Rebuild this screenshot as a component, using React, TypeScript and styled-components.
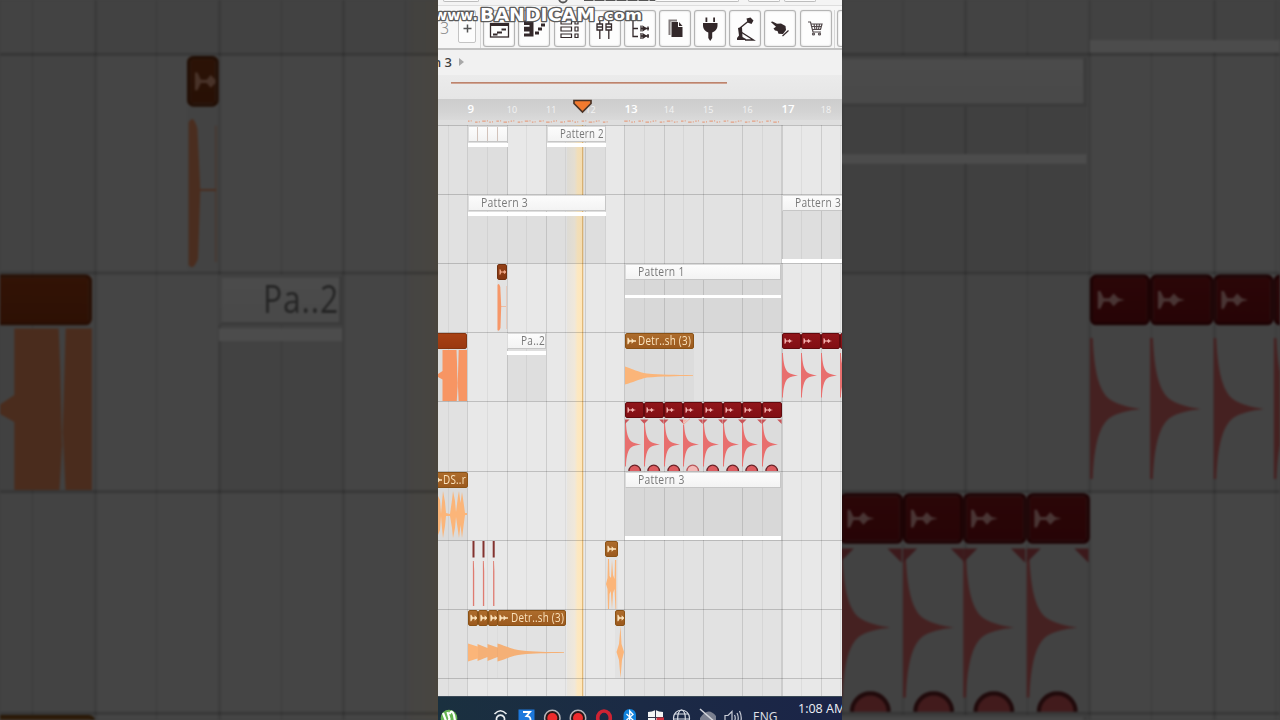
import React from "react";
import styled, { createGlobalStyle, css } from "styled-components";

const GlobalStyle = createGlobalStyle`
  html, body { margin: 0; padding: 0; background: #434343; overflow: hidden; }
  * { box-sizing: border-box; }
`;

/* ---------- stage ---------- */

const TRACK_TOP = 124.9;
const LANE = 69.15;
const BAR = 39.25;

const Stage = styled.main`
  position: relative;
  width: 1280px;
  height: 720px;
  overflow: hidden;
  display: flex;
  justify-content: center;
  background: #434343;
  font-family: "Open Sans", "Noto Sans", sans-serif;
`;

const Backdrop = styled.div`
  position: absolute;
  inset: 0;
  overflow: hidden;
  display: flex;
  justify-content: center;
  align-items: flex-start;
  padding-top: ${TRACK_TOP + LANE}px;
  filter: blur(1.2px);
  &::after {
    content: "";
    position: absolute;
    inset: -4px;
    background: rgba(0, 0, 0, 0.7);
  }
`;

const Magnified = styled.div`
  flex: none;
  width: 404px;
  transform: scale(3.168);
  transform-origin: 202px ${360 - TRACK_TOP - LANE}px;
`;

const Screen = styled.section`
  position: relative;
  width: 404px;
  height: 720px;
  display: flex;
  flex-direction: column;
  overflow: hidden;
  background: #e8e8e8;
`;

/* ---------- top toolbar ---------- */

const UpperBar = styled.div`
  flex: none;
  height: 6px;
  display: flex;
  align-items: flex-start;
  background: #f4f4f4;
  border-bottom: 1px solid #dedede;
  > * { flex: none; }
`;

const Stub = styled.div<{ $w: number; $gap: number; $h?: number }>`
  width: ${(p) => p.$w}px;
  height: ${(p) => p.$h ?? 3}px;
  margin-left: ${(p) => p.$gap}px;
  border: 1px solid #bdbdbd;
  border-top: 0;
  border-radius: 0 0 3px 3px;
  background: #fbfbfb;
`;

const KnobStub = styled.svg`
  margin-left: 78px;
`;

const TitleStub = styled.div`
  width: 71px;
  height: 1px;
  margin-left: 15px;
  background: repeating-linear-gradient(90deg, #555 0 9px, #aaa 9px 11px);
`;

const Toolbar = styled.div`
  flex: none;
  height: 44px;
  display: flex;
  align-items: flex-start;
  padding-top: 4px;
  background: #f7f7f7;
  border-bottom: 2px solid #c3c3c3;
  > * { flex: none; }
`;

const Tempo = styled.span`
  width: 20px;
  padding: 6px 0 0 2px;
  font-size: 16px;
  line-height: 24px;
  color: #777;
  font-weight: 300;
`;

const PlusButton = styled.div`
  width: 18px;
  height: 33px;
  display: flex;
  align-items: center;
  justify-content: center;
  padding-top: 4px;
  border: 1.5px solid #c4c4c4;
  border-radius: 2px;
  background: #fdfdfd;
`;

const Rule = styled.div<{ $l: number; $r: number }>`
  width: 1px;
  height: 38px;
  margin: 0 ${(p) => p.$r}px 0 ${(p) => p.$l}px;
  background: #d8d8d8;
`;

const ToolButton = styled.div`
  width: 32px;
  height: 37px;
  margin-right: 3.15px;
  display: flex;
  align-items: center;
  justify-content: center;
  border: 1.5px solid #b4b4b4;
  border-radius: 3px;
  background: #fdfdfd;
  box-shadow: inset 0 0 2px #ccc, 0 0 1px #ccc;
`;

const Watermark = styled.svg`
  position: absolute;
  left: 0;
  top: 0;
  font-family: "DejaVu Sans", sans-serif;
  font-weight: 700;
`;

/* ---------- breadcrumb, overview, ruler ---------- */

const Breadcrumb = styled.div`
  flex: none;
  height: 25px;
  display: flex;
  align-items: center;
  gap: 7px;
  padding-bottom: 1px;
  background: #f1f1f1;
  color: #3c3c3c;
  font: 500 13px/24px "Noto Sans", sans-serif;
  white-space: pre;
  span { margin-left: -5px; }
`;

const Overview = styled.div`
  flex: none;
  height: 24px;
  padding: 6.5px 0 0 13px;
  background: linear-gradient(#ebebeb, #e6e6e6);
  &::after {
    content: "";
    display: block;
    width: 276px;
    height: 2px;
    background: linear-gradient(#b3735a, #d9b5a6);
  }
`;

const Ruler = styled.div`
  position: relative;
  flex: none;
  height: 21px;
  padding: 0 0 2px 29.5px;
  display: flex;
  align-items: center;
  background: linear-gradient(#cdcdcd, #d3d3d3 60%, #dadada);
`;

const Tick = styled.span<{ $major: boolean }>`
  flex: none;
  width: ${BAR}px;
  color: ${(p) => (p.$major ? "#fff" : "#f3f3f3")};
  font-size: ${(p) => (p.$major ? 11.5 : 9)}px;
  font-weight: ${(p) => (p.$major ? 600 : 500)};
  line-height: 18px;
  padding-top: ${(p) => (p.$major ? 0 : 2)}px;
`;

const Marker = styled.svg`
  position: absolute;
  left: 134px;
  top: -1px;
`;

const Strip = styled.div`
  flex: none;
  height: ${TRACK_TOP - 120}px;
  background: #dedede;
  svg { display: block; }
`;

/* ---------- playlist ---------- */

const Playlist = styled.div`
  position: relative;
  width: 404px;
  overflow: hidden;
  background:
    repeating-linear-gradient(90deg,
      rgba(0,0,0,.12) -9.75px, rgba(0,0,0,.12) -8.75px,
      transparent -8.75px, transparent 9.75px,
      rgba(0,0,0,.05) 9.75px, rgba(0,0,0,.05) 10.75px,
      transparent 10.75px, transparent 29.5px),
    linear-gradient(90deg, #e1e1e1 29.5px, #e8e8e8 29.5px 186.5px, #e2e2e2 186.5px 343.5px, #e8e8e8 343.5px);
`;

const Lanes = styled.div`
  position: relative;
  display: flex;
  flex-direction: column;
`;

const Lane = styled.div`
  position: relative;
  flex: none;
  height: ${LANE}px;
  border-top: 1px solid rgba(0, 0, 0, 0.18);
`;

const Playhead = styled.div`
  position: absolute;
  left: 129px;
  width: 17px;
  top: 0;
  bottom: 0;
  background:
    linear-gradient(90deg, transparent 15.2px, #e2b878 15.200px 16.200px, #e9dcc6 16.200px),
    linear-gradient(90deg, #e8e5df, #f0e8da 45%, #fce8c2 62%, #ffe6b8 90%);
`;

type Tone = "pattern" | "brick" | "amber" | "red" | "rust";

const tones: Record<Tone, { head: string; edge: string; text: string; wave: string }> = {
  pattern: { head: "linear-gradient(#fcfcfc, #f3f3f3)", edge: "#c6c6c6", text: "#787878", wave: "#fff" },
  brick: { head: "linear-gradient(#a84114, #9a3810)", edge: "#84340f", text: "#f1b894", wave: "#f79563" },
  rust: { head: "linear-gradient(#944016, #843612)", edge: "#703010", text: "#f0a888", wave: "#f79768" },
  amber: { head: "linear-gradient(#ad6c2c, #9c5a1e)", edge: "#8a5216", text: "#fbe3bd", wave: "#fbb579" },
  red: { head: "linear-gradient(#90151a, #820f14)", edge: "#620a0e", text: "#f5b3b0", wave: "#e86f6e" },
};

const ClipBox = styled.div<{ $x: number; $w: number }>`
  position: absolute;
  left: ${(p) => p.$x}px;
  width: ${(p) => p.$w}px;
  top: 0;
  bottom: 0;
  display: flex;
  flex-direction: column;
`;

const ClipHead = styled.div<{ $tone: Tone; $short?: boolean }>`
  flex: none;
  height: ${(p) => (p.$short ? 15.5 : 16)}px;
  display: flex;
  align-items: center;
  overflow: hidden;
  background: ${(p) => tones[p.$tone].head};
  border: 1px solid ${(p) => tones[p.$tone].edge};
  color: ${(p) => tones[p.$tone].text};
  ${(p) =>
    p.$tone === "pattern"
      ? css`border-top-color: #dadada; border-left-color: #dcdcdc;`
      : css`border-radius: 2px; padding-left: 1px;`}
`;

const ClipLabel = styled.span<{ $indent: number; $stretch: number }>`
  flex: none;
  margin-left: ${(p) => p.$indent}px;
  font: 500 12px/14px "Open Sans", sans-serif;
  letter-spacing: 0.3px;
  white-space: nowrap;
  transform: scaleX(${(p) => p.$stretch});
  transform-origin: left center;
`;

const ClipBody = styled.div<{ $tone: Tone }>`
  flex: 1;
  min-height: 0;
  overflow: hidden;
  background: rgba(0, 0, 0, ${(p) => (p.$tone === "pattern" ? 0.045 : 0.025)});
  svg { display: block; overflow: visible; }
`;

const NoteStrip = styled.div<{ $top: number; $h: number }>`
  height: ${(p) => p.$h}px;
  margin-top: ${(p) => p.$top}px;
  background: #fff;
`;

const Slices = styled.div`
  flex: 1;
  align-self: stretch;
  display: flex;
  i { flex: 1; border-right: 1px solid #d2c3bb; }
  i:last-child { border: 0; }
`;

type Wave = "kick" | "kickFade" | "kickPale" | "decay" | "block" | "stab" | "swell" | "burst" | "burst2" | "chain";

interface Clip {
  x: number;
  w: number;
  tone: Tone;
  label?: string;
  indent?: number;
  stretch?: number;
  strip?: [number, number];
  wave?: Wave;
  slices?: boolean;
  short?: boolean;
  plain?: boolean;
}

const KICK = "M0 4H.9C1.4 15 3 20.500 6 23.200 8.500 25 12 25.900 16 26.400 12 26.900 8.500 27.600 6 29.400 3 32 1.400 37.500 .9 48.500H0Z";

function WaveShape({ kind, w, color }: { kind: Wave; w: number; color: string }) {
  const fade = kind === "kickFade" || kind === "kickPale";
  const pale = kind === "kickPale";
  return (
    <svg width={w} height={53} fill={color}>
      {(kind === "kick" || fade) && <path d={KICK} />}
      {fade && (
        <g>
          <path d="M0 1.500H4.500L0 6Z" fill={pale ? "#f2b6ab" : "#c9565a"} />
          <path d="M19.600 1.500H15.100L19.600 6Z" fill="#c9565a" />
          {pale && <path d="M0 7L7 .5" stroke="#f0aaa0" strokeWidth="1" />}
          <circle cx="9.700" cy="53" r="5.800" fill={pale ? "#f2b8b6" : "#dc5c60"} stroke={pale ? "#b8585b" : "#6b2226"} strokeWidth="1.300" />
        </g>
      )}
      {kind === "decay" && <path d="M0 17.500C8 20 13 23 22 24.600 36 25.800 50 26 68 26.200V27C50 27 36 27.500 22 28.500 13 30.500 8 33.500 0 35.500Z" />}
      {kind === "block" && <path d="M0 25L4.500 22V1H18.500L19 14 19.600 39 20.400 12 20.700 1H29.500V53H20.700L19.800 34 18.700 53H4.500V30.500L0 28Z" />}
      {kind === "stab" && <path d="M.5 5Q2 2 3.300 7L4.200 26H9V6H9.300V49H9V26.600H4.200L3.500 48Q2 52 .5 50Z" />}
      {kind === "swell" && <path d="M0 8L2 12 3 26 4 14 5 3 7 14 8 25 12 26 14 12 15 3 17 13 18 24 20 8 21 3 22.500 15 24 4 25.500 14 27 25H29V27H27L25.500 38 24 50 22.500 37 21 50 20 43 18 29 17 40 15 50 14 40 12 28H8L7 38 5 50 4 40 3 28 2 42 0 47Z" />}
      {kind === "burst" && <path d="M3 2H4L4.500 19 6 21 7 3 8 18 9.500 22 10 3H11.200V52H10.500L9.500 32 8 36 7 52 5.800 34 4.500 37 4 52H3L2.500 32 1 27 2.500 21Z" />}
      {kind === "burst2" && <path d="M5.500 0L6.500 18 9 26 7 34 5.500 52 4 34 1.500 26 4 18Z" />}
      {kind === "chain" && <path d="M0 17.500L9.500 20.500V18L19.500 22V18L29.500 21.500V17.500C38 20 44 23.500 54 24.500 66 25.700 78 26 96 26.200V27C78 27 66 27.300 54 28.500 44 29.500 38 33 29.500 35.500V31L19.500 35V31L9.500 35V32.500L0 35.500Z" />}
    </svg>
  );
}

const Glyph = styled.svg`
  flex: none;
`;

function SampleGlyph({ bold }: { bold?: boolean }) {
  return (
    <Glyph width="9" height="8" viewBox="0 0 9 8" fill="currentColor">
      {bold ? (
        <path d="M.4 .8H1.300L2.800 3.300H4.600V1.200L6.700 3.300H9V4.700H6.700L4.600 6.800V4.700H2.800L1.300 7.200H.4Z" />
      ) : (
        <path d="M.5 1.200H1.300L2.400 3.500H4.200L5.500 2 7 3.500 9 4 7 4.500 5.500 6 4.200 4.500H2.400L1.300 6.800H.5Z" />
      )}
    </Glyph>
  );
}

const kicks = (from: number, n: number, fade: boolean): Clip[] =>
  Array.from({ length: n }, (_, i) => ({
    x: from + i * 19.65,
    w: 19.65,
    tone: "red" as Tone,
    wave: (fade ? (i === 3 ? "kickPale" : "kickFade") : "kick") as Wave,
  }));

const lanes: Clip[][] = [
  [
    { x: 29.5, w: 40, tone: "pattern", slices: true, strip: [1.3, 4] },
    { x: 108.5, w: 59, tone: "pattern", label: "Pattern 2", indent: 12.5, stretch: 0.81, strip: [1.3, 4] },
  ],
  [
    { x: 29.5, w: 138, tone: "pattern", label: "Pattern 3", indent: 12, stretch: 0.87, strip: [1.1, 4.3] },
    { x: 343.5, w: 80, tone: "pattern", label: "Pattern 3", indent: 12.5, stretch: 0.85, strip: [47.6, 4] },
  ],
  [
    { x: 59, w: 10, tone: "rust", wave: "stab" },
    { x: 186.5, w: 156.5, tone: "pattern", label: "Pattern 1", indent: 12.5, stretch: 0.86, strip: [15.4, 3], short: true },
  ],
  [
    { x: -40, w: 69.4, tone: "brick", wave: "block", plain: true },
    { x: 69, w: 39.3, tone: "pattern", label: "Pa..2", indent: 13, stretch: 0.84, strip: [1.2, 4] },
    { x: 186.5, w: 69, tone: "amber", label: "Detr..sh (3)", indent: 2.5, stretch: 0.82, wave: "decay" },
    ...kicks(343.5, 4, false),
  ],
  kicks(186.5, 8, true),
  [
    { x: -7, w: 37, tone: "amber", label: "DS..r", indent: 0.5, stretch: 0.82, wave: "swell" },
    { x: 186.5, w: 156.5, tone: "pattern", label: "Pattern 3", indent: 12.5, stretch: 0.86, strip: [48, 4] },
  ],
  [{ x: 167.3, w: 12.7, tone: "amber", wave: "burst" }],
  [
    { x: 29.5, w: 10.2, tone: "amber", wave: "chain" },
    { x: 39.5, w: 10.2, tone: "amber" },
    { x: 49.5, w: 10.2, tone: "amber" },
    { x: 59.3, w: 69, tone: "amber", label: "Detr..sh (3)", indent: 2.5, stretch: 0.82 },
    { x: 176.7, w: 10.5, tone: "amber", wave: "burst2" },
  ],
  [],
];

const WaveHolder = styled.div<{ $shift: number }>`
  width: 0;
  margin-left: ${(p) => p.$shift}px;
`;

const ChainBody = styled(ClipBody)`
  overflow: visible;
`;

const Slivers = styled.svg`
  position: absolute;
  left: 33px;
  top: 0;
`;

function ClipView({ clip, quiet }: { clip: Clip; quiet?: boolean }) {
  const showLabel = clip.label && (!quiet || clip.label === "Pa..2");
  const Body = clip.wave === "chain" ? ChainBody : ClipBody;
  const shift = clip.wave === "block" ? 40 : clip.wave === "swell" ? 7 : 0;
  return (
    <ClipBox $x={clip.x} $w={clip.w}>
      <ClipHead $tone={clip.tone} $short={clip.short}>
        {clip.slices && <Slices><i /><i /><i /><i /></Slices>}
        {clip.tone !== "pattern" && !clip.plain && <SampleGlyph bold={clip.tone === "amber"} />}
        {showLabel && (
          <ClipLabel $indent={clip.indent ?? 0} $stretch={clip.stretch ?? 1}>
            {clip.label}
          </ClipLabel>
        )}
      </ClipHead>
      <Body $tone={clip.tone}>
        {clip.strip && <NoteStrip $top={clip.strip[0]} $h={clip.strip[1]} />}
        {clip.wave && (
          <WaveHolder $shift={shift}>
            <WaveShape kind={clip.wave} w={clip.w} color={tones[clip.tone].wave} />
          </WaveHolder>
        )}
      </Body>
    </ClipBox>
  );
}

function Tracks({ from, to, quiet }: { from: number; to: number; quiet?: boolean }) {
  return (
    <Playlist>
      <Playhead />
      <Lanes>
        {lanes.slice(from, to).map((clips, i) => (
          <Lane key={i}>
            {clips.map((c, j) => (
              <ClipView key={j} clip={c} quiet={quiet} />
            ))}
            {from + i === 6 && (
              <Slivers width="30" height="68">
                {[1.5, 11.5, 21.7].map((x) => (
                  <g key={x}>
                    <rect x={x} y="0" width="2" height="16.500" fill="#83332f" />
                    <path d={`M${x + 0.4} 20H${x + 1.3}L${x + 1.7} 30V65H${x + 0.4}Z`} fill="#df7b70" />
                  </g>
                ))}
              </Slivers>
            )}
          </Lane>
        ))}
      </Lanes>
    </Playlist>
  );
}

const TrackArea = styled.div`
  flex: none;
  height: ${696 - TRACK_TOP}px;
  overflow: hidden;
`;

/* ---------- toolbar icons ---------- */

const dark = "#33282a";

const toolIcons: React.ReactNode[] = [
  <g key="playlist" fill="none" stroke={dark}>
    <rect x="2.500" y="6.500" width="18" height="13.500" strokeWidth="1.300" />
    <path d="M2 7.500H21" strokeWidth="3" />
    <path d="M5 17.500H9.500M9 15.500H14M13.500 12.500H18" strokeWidth="2" />
  </g>,
  <g key="piano" fill={dark}>
    <path d="M1 3.500H10.500V19.500H1V16.500H6.500V14.500H1V9.800H6.500V8H1Z" />
    <path d="M12 14.500H16V17.500H12ZM15 10.500H19V13.500H15ZM18 6.500H22V9.500H18Z" />
  </g>,
  <g key="rack" fill="none" stroke={dark} strokeWidth="1.200">
    <path d="M3 3H13.500V7H3ZM3 10H13.500V14H3ZM3 17H13.500V20.500H3ZM17 3H20V7H17ZM17 10H20V14H17ZM17 17H20V20.500H17Z" />
  </g>,
  <g key="mixer" fill="none" stroke={dark} strokeWidth="1.300">
    <path d="M6.800 2V7M6.800 13V22M15.800 2V7M15.800 13V22M4 7H9.500V13H4ZM13 7H18.500V13H13ZM4 10H9.500M13 10H18.500" />
  </g>,
  <g key="browser" fill="none" stroke={dark} strokeWidth="1.300">
    <path d="M5 4V19.500H10M5 11.500H10M13 8.500V14.500M13 16V22M13 11.500H21M13 19H21" />
    <path d="M15 9.500L18 11.500 15 13.500ZM15 17L18 19 15 21ZM20 9.500V13.500M20 17V21" fill={dark} />
  </g>,
  <g key="copy" fill={dark}>
    <path d="M4.500 2.500H13V4.500H6.500V18H4.500Z" opacity=".6" />
    <path d="M7.500 5H14V10H18.500V20H7.500ZM15 5L18.500 9H15Z" />
  </g>,
  <g key="plug" fill={dark}>
    <path d="M6.500 .5H8.300V5H6.500ZM14.200 .5H16V5H14.200ZM4 6H18.500V8.500C18.500 12 16 14.500 13.200 15.500V21L11.200 24 9.300 21V15.500C6.500 14.500 4 12 4 8.500Z" />
  </g>,
  <g key="lamp" fill={dark}>
    <path d="M12.500 1.500L16.500 .5 19.500 3.500 17.500 7 13.500 5.500ZM4 11L8 10 8.500 20 12 22V23H3V21L5 18.500Z" />
    <path d="M6 11L14 4.500M7 15L19.500 23H11" fill="none" stroke={dark} strokeWidth="1.400" />
  </g>,
  <g key="hand" fill={dark}>
    <path d="M1.800 5L3.500 4.500 8 6.800 12 6.500 16.500 9 17 13 14 17 9.500 16.800 8.500 14 6 13.500 4.500 11.500 7 9.800Z" />
    <path d="M13.500 19L19.500 13.500" stroke={dark} strokeWidth="1.200" />
  </g>,
  <g key="cart" fill="none" stroke="#51484a" strokeWidth="1.200">
    <path d="M4 5H6.500L9 15H17M7 7H18L16.500 12.500H8.500M7.500 9.500H17.500M10 7L11 12.500M12.700 7V12.500M15.500 7L14.500 12.500" />
    <circle cx="9.500" cy="17" r="1" /><circle cx="15.500" cy="17" r="1" />
  </g>,
];

/* ---------- taskbar ---------- */

const Taskbar = styled.footer`
  flex: none;
  height: 24px;
  display: flex;
  align-items: flex-start;
  overflow: hidden;
  background: linear-gradient(90deg, #1a303f, #1b2a45 50%, #1b2447);
  border-top: 1px solid #3a4956;
`;

const Tray = styled.div`
  flex: none;
  width: 308px;
  height: 23px;
  overflow: hidden;
  svg { display: block; }
`;

const Lang = styled.span`
  flex: none;
  width: 50px;
  margin-left: 7px;
  padding: 10.5px 0 0;
  color: #e0e3ea;
  font: 12px/20px "Open Sans", sans-serif;
`;

const Clock = styled.span`
  flex: none;
  margin-left: -5px;
  padding-top: 2px;
  color: #eef0f5;
  font: 12.5px/20px "Open Sans", sans-serif;
  white-space: nowrap;
`;

function TrayIcons() {
  return (
    <svg width="308" height="32" viewBox="0 0 308 32">
      <circle cx="11" cy="21" r="8.300" fill="#67b552" />
      <path d="M5 16L8 24Q10 26 11.500 22L9.500 15M11.500 17Q14 12 16 18L17 24" fill="none" stroke="#fff" strokeWidth="2.200" />
      <g fill="none" stroke="#e8ecef" strokeWidth="1.700">
        <path d="M56.500 17Q62.500 10.500 68.500 17" />
        <path d="M59 24A4 4 0 1 1 66 24" />
      </g>
      <rect x="80.500" y="12.500" width="16" height="17" fill="#1c78dc" />
      <path d="M85 15H92L88.500 19Q93 19 92.500 24" fill="none" stroke="#fff" strokeWidth="1.800" />
      {[114.300, 140].map((x) => (
        <g key={x}>
          <circle cx={x} cy="21" r="7.700" fill="#271719" stroke="#b4b4b8" strokeWidth="1.500" />
          <circle cx={x} cy="21" r="5" fill="#ef2b2c" />
        </g>
      ))}
      <ellipse cx="166" cy="21" rx="6.300" ry="7" fill="none" stroke="#cf2333" strokeWidth="3.600" />
      <rect x="185.500" y="12" width="12.500" height="18" rx="6" fill="#1183dc" />
      <path d="M188.500 17L195 23 191.700 26V14L195 17.500 188.500 23" fill="none" stroke="#fff" strokeWidth="1.300" />
      <path d="M210 15Q214 15 217.500 13 221 15 225 15V30H210Z" fill="#f4f4f4" />
      <path d="M217.500 13V30M210 20.500H225" stroke="#30364a" strokeWidth="1" />
      <rect x="218.500" y="20.500" width="7.500" height="8" fill="#d0303f" />
      <g fill="none" stroke="#d9dde5" strokeWidth="1.200">
        <circle cx="243.500" cy="21" r="8" />
        <ellipse cx="243.500" cy="21" rx="3.800" ry="8" />
        <path d="M236.500 17H250.500M235.500 22H251.500" />
      </g>
      <path d="M262 21Q270 9 278 19V25H262Z" fill="#7b8090" />
      <path d="M262 12L278 26" stroke="#d5d7dd" strokeWidth="1.500" />
      <g fill="none" stroke="#c9ccd6" strokeWidth="1.200">
        <path d="M287 18.500H290L294 14.500V27L290 23.500H287ZM296.500 18Q298 21 296.500 24M299 16Q301.500 21 299 26M301.500 14Q305 21 301.500 28" />
      </g>
    </svg>
  );
}

const overviewMarks = Array.from({ length: 44 }, (_, i) => 30 + i * 7.1).filter((x) => x < 168 || (x > 186 && x < 343));

export default function App() {
  return (
    <>
      <GlobalStyle />
      <Stage>
        <Backdrop aria-hidden>
          <Magnified>
            <Tracks from={1} to={6} quiet />
          </Magnified>
        </Backdrop>
        <Screen>
          <UpperBar>
            <Stub $w={36} $gap={5} $h={2} />
            <KnobStub width="12" height="5">
              <circle cx="6" cy="-1.500" r="4" fill="none" stroke="#555" strokeWidth="1.800" />
            </KnobStub>
            <TitleStub />
            <Stub $w={84} $gap={0} $h={2} />
            <Stub $w={32} $gap={9} $h={2} />
            <Stub $w={32} $gap={4} $h={2} />
          </UpperBar>
          <Toolbar>
            <Tempo>3</Tempo>
            <PlusButton>
              <svg width="9" height="9">
                <path d="M4.500 .5V8.500M.5 4.500H8.500" stroke="#555" strokeWidth="1.500" />
              </svg>
            </PlusButton>
            <Rule $l={4} $r={2.3} />
            {toolIcons.map((icon, i) => (
              <ToolButton key={i}>
                <Glyph width="23" height="24" viewBox="0 0 23 24">{icon}</Glyph>
              </ToolButton>
            ))}
            <Rule $l={-1} $r={2} />
            <ToolButton />
          </Toolbar>
          <Breadcrumb>
            <span>n 3</span>
            <svg width="5" height="8">
              <path d="M0 0L5 4 0 8Z" fill="#a8a8a8" />
            </svg>
          </Breadcrumb>
          <Overview />
          <Ruler>
            {[9, 10, 11, 12, 13, 14, 15, 16, 17, 18].map((n) => (
              <Tick key={n} $major={n % 4 === 1}>{n}</Tick>
            ))}
            <Marker width="21" height="16">
              <path d="M2 2.500H19V5.500L10.500 14 2 5.500Z" fill="#f37a2e" stroke="#4c3427" strokeWidth="1.700" />
            </Marker>
          </Ruler>
          <Strip>
            <svg width="404" height="4">
              {overviewMarks.map((x, i) => (
                <path key={i} d={`M${x} ${1.2 + (i % 2)}h${1.5 + (i % 3)}m1.200 -.4h1`} stroke="#e5a083" strokeWidth="1.300" />
              ))}
            </svg>
          </Strip>
          <TrackArea>
            <Tracks from={0} to={9} />
          </TrackArea>
          <Taskbar>
            <Tray><TrayIcons /></Tray>
            <Lang>ENG</Lang>
            <Clock>1:08 AM</Clock>
          </Taskbar>
          <Watermark width="210" height="28" fill="#fff" stroke="#5a5a5a" strokeWidth="2.600" paintOrder="stroke" strokeLinejoin="round">
            <text x="-4" y="20" fontSize="14" textLength="44" lengthAdjust="spacingAndGlyphs">www.</text>
            <text x="42" y="20.500" fontSize="17" textLength="115" lengthAdjust="spacingAndGlyphs">BANDICAM</text>
            <text x="160" y="20" fontSize="14" textLength="44" lengthAdjust="spacingAndGlyphs">.com</text>
          </Watermark>
        </Screen>
      </Stage>
    </>
  );
}
